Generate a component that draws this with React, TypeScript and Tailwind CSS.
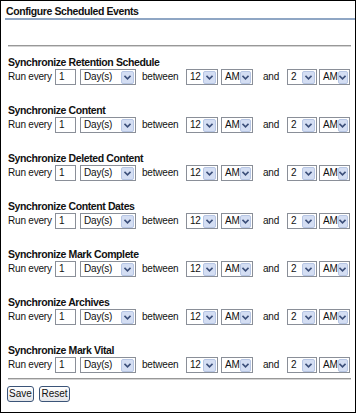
import React from 'react'

const events = [
    'Synchronize Retention Schedule',
    'Synchronize Content',
    'Synchronize Deleted Content',
    'Synchronize Content Dates',
    'Synchronize Mark Complete',
    'Synchronize Archives',
    'Synchronize Mark Vital',
]

const font = { fontFamily: '"Liberation Sans", Arial, sans-serif' }

function Arrow() {
    return (
        <div className="ml-auto mr-[1px] flex h-[13px] w-[13px] items-center justify-center rounded-[2px] border border-[#b7c6e4] bg-[#d4def3]">
            <svg width="7" height="5" viewBox="0 0 7 5">
                <path d="M0.5 0.8 L3.5 3.8 L6.5 0.8" fill="none" stroke="#3c4f7a" strokeWidth="1.6" />
            </svg>
        </div>
    )
}

function Select({ value, className }: { value: string; className: string }) {
    return (
        <div className={`flex h-[16px] items-center border border-[#8a8f98] bg-white pl-[3px] ${className}`}>
            <span className="whitespace-nowrap leading-[14px]">{value}</span>
            <Arrow />
        </div>
    )
}

function Row() {
    return (
        <div className="flex h-[16px] items-center whitespace-nowrap pl-[7px] text-[10px] tracking-[-0.2px] text-[#111]">
            <span className="w-[47px] leading-[14px]">Run every</span>
            <div className="flex h-[16px] w-[21px] items-center border border-[#8a8f98] bg-white pl-[3px] leading-[14px]">1</div>
            <Select value="Day(s)" className="ml-[4px] w-[56px]" />
            <span className="ml-[6px] w-[44px] leading-[14px]">between</span>
            <Select value="12" className="w-[32px]" />
            <Select value="AM" className="ml-[3px] w-[32px]" />
            <span className="ml-[10px] w-[24px] leading-[14px]">and</span>
            <Select value="2" className="w-[30px]" />
            <Select value="AM" className="ml-[2px] w-[31px]" />
        </div>
    )
}

function Button({ label, className }: { label: string; className: string }) {
    return (
        <button className={`flex h-[16px] items-center justify-center rounded-[3px] border border-[#3b5478] bg-gradient-to-b from-white to-[#e4e6ea] text-[10px] leading-[14px] text-[#111] ${className}`}>
            {label}
        </button>
    )
}

export default function App() {
    return (
        <div style={font} className="h-[413px] w-[356px] border border-black bg-white pt-[3px]">
            <p className="whitespace-nowrap pl-[5px] text-[10.5px] font-bold leading-[14px] tracking-[-0.4px] text-[#111]">Configure Scheduled Events</p>
            <div className="ml-[4px] h-[2px] bg-[#8fa6c4]" />

            <div className="ml-[7px] mt-[25px] h-[2px] w-[343px] border-t border-[#989898] border-b border-b-[#d4d4d4]" />

            <div className="mt-[8px] flex flex-col gap-[18px]">
                {events.map(name => (
                    <div key={name}>
                        <p className="h-[14px] whitespace-nowrap pl-[7px] text-[10.5px] font-bold leading-[14px] tracking-[-0.4px] text-[#111]">{name}</p>
                        <Row />
                    </div>
                ))}
            </div>

            <div className="ml-[7px] mt-[5px] h-[2px] w-[343px] border-t border-[#989898] border-b border-b-[#d4d4d4]" />

            <div className="mt-[6px] flex gap-[5px] pl-[6px]">
                <Button label="Save" className="w-[27px]" />
                <Button label="Reset" className="w-[31px]" />
            </div>
        </div>
    )
}
